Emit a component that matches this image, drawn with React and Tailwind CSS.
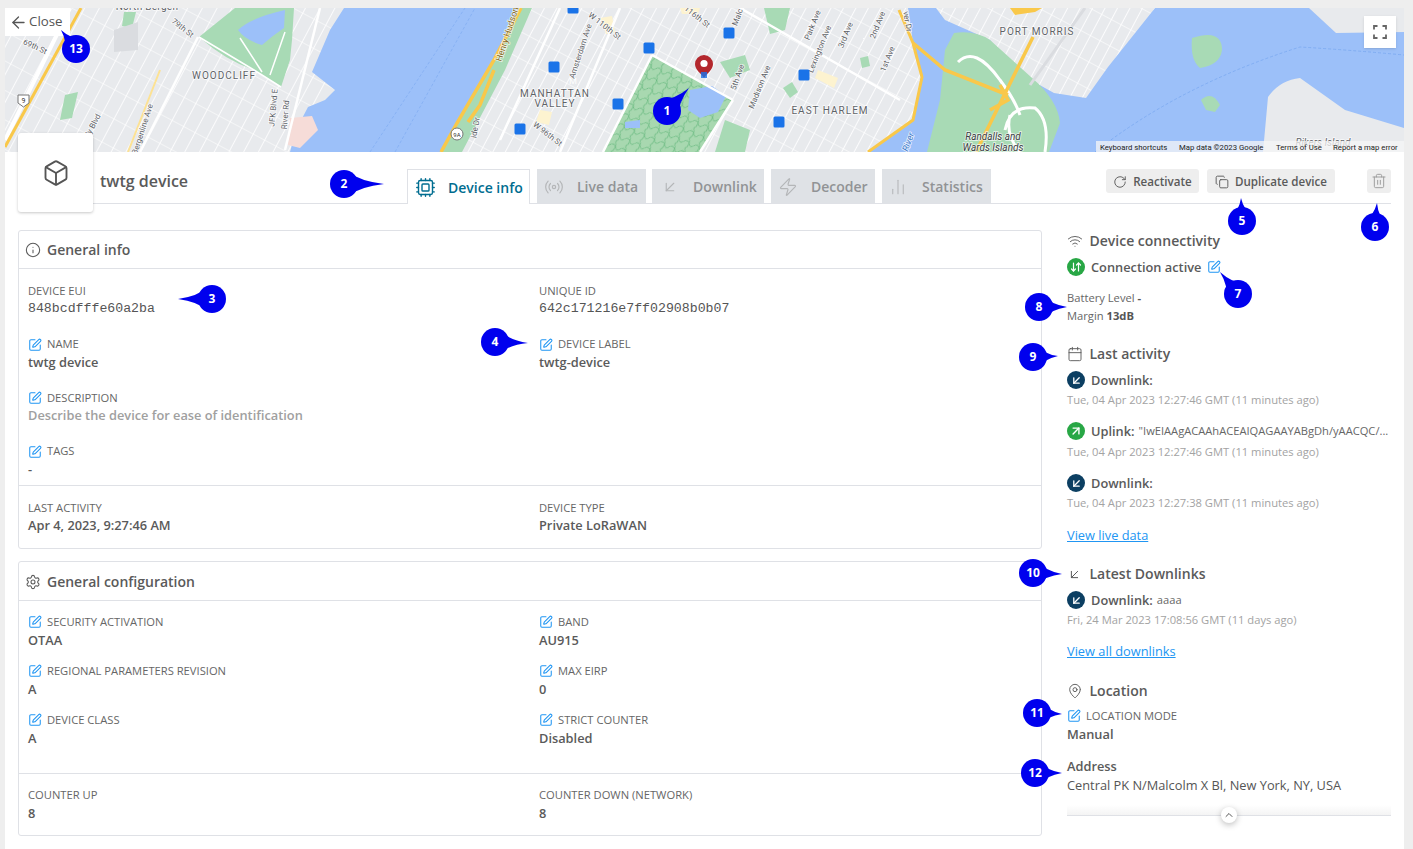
import React from "react";
import { ArrowLeft, Box, Cpu, Radio, ArrowDownLeft, ArrowUpRight, ArrowDownUp, Zap, ChartNoAxesColumn, RotateCw, Copy, Trash2, Wifi, SquarePen, Calendar, MapPin, Info, Settings, ChevronUp } from "lucide-react";

const balloons = [
  { n: 1, x: 667, y: 111, tx: 689, ty: 88 },
  { n: 2, x: 344, y: 184, tx: 384, ty: 184 },
  { n: 3, x: 212, y: 299, tx: 178, ty: 299 },
  { n: 4, x: 495, y: 342, tx: 528, ty: 343 },
  { n: 5, x: 1242, y: 221, tx: 1241, ty: 198 },
  { n: 6, x: 1375, y: 227, tx: 1377, ty: 203 },
  { n: 7, x: 1238, y: 294, tx: 1220, ty: 272 },
  { n: 8, x: 1039, y: 307, tx: 1067, ty: 307 },
  { n: 9, x: 1033, y: 357, tx: 1058, ty: 356 },
  { n: 10, x: 1033, y: 573, tx: 1062, ty: 574 },
  { n: 11, x: 1037, y: 713, tx: 1062, ty: 714 },
  { n: 12, x: 1035, y: 773, tx: 1062, ty: 773 },
  { n: 13, x: 76, y: 49, tx: 61, ty: 30 },
];

function Balloon({ n, x, y, tx, ty }) {
  const dx = tx - x, dy = ty - y;
  const len = Math.hypot(dx, dy);
  const ux = dx / len, uy = dy / len;
  const r = 14;
  const a = [ -uy * r * 0.85 + ux * 4, ux * r * 0.85 + uy * 4 ];
  const b = [ uy * r * 0.85 + ux * 4, -ux * r * 0.85 + uy * 4 ];
  const mid = 0.42;
  const c1 = [ dx * mid - uy * 2.5, dy * mid + ux * 2.5 ];
  const c2 = [ dx * mid + uy * 2.5, dy * mid - ux * 2.5 ];
  return (
    <div className="absolute w-0 h-0" style={{ left: x, top: y }}>
      <svg className="absolute overflow-visible left-0 top-0" width="1" height="1">
        <circle cx="0" cy="0" r={r} fill="#0000ee" />
        <path d={`M${a[0]} ${a[1]} Q${c1[0]} ${c1[1]} ${dx} ${dy} Q${c2[0]} ${c2[1]} ${b[0]} ${b[1]} Z`} fill="#0000ee" />
      </svg>
      <span className="absolute -left-[14px] -top-[14px] w-[28px] h-[28px] flex items-center justify-center text-white text-[12px] font-bold font-['Noto_Sans']">{n}</span>
    </div>
  );
}

const L = ({ x, y, r = 0, s = 9, c = "#5f6368", i, w = 400, ls = 0, children }) => (
  <text x={x} y={y} textAnchor="middle" fontSize={s} fill={c} fontStyle={i ? "italic" : "normal"} fontWeight={w} letterSpacing={ls} fontFamily="Roboto, sans-serif" transform={r ? `rotate(${r} ${x} ${y})` : undefined} stroke="#ffffff" strokeWidth="1.6" paintOrder="stroke" strokeOpacity="0.75">{children}</text>
);

const Metro = ({ x, y }) => (
  <g>
    <rect x={x - 5.5} y={y - 5.5} width="11" height="11" rx="1.5" fill="#1a73e8" />
    <text x={x} y={y + 3.5} textAnchor="middle" fontSize="9.5" fontWeight="400" fill="white" fontFamily="'Liberation Sans', sans-serif">M</text>
  </g>
);

function MapArt() {
  return (
    <svg className="w-full h-full block" viewBox="5 8 1399 144" preserveAspectRatio="none">
      <defs>
        <pattern id="gridA" width="26" height="13" patternUnits="userSpaceOnUse" patternTransform="rotate(-62)">
          <rect width="26" height="13" fill="#e8eaed" />
          <path d="M0 0H26" stroke="#fff" strokeWidth="1.7" />
          <path d="M0 0V13" stroke="#fff" strokeWidth="1.1" />
        </pattern>
        <pattern id="gridB" width="24" height="11" patternUnits="userSpaceOnUse" patternTransform="rotate(-62)">
          <rect width="24" height="11" fill="#e8eaed" />
          <path d="M0 0H24" stroke="#fff" strokeWidth="1.8" />
          <path d="M0 0V11" stroke="#fff" strokeWidth="1.2" />
        </pattern>
        <pattern id="parkLines" width="11" height="11" patternUnits="userSpaceOnUse" patternTransform="rotate(24)">
          <rect width="11" height="11" fill="#a8d8b0" />
          <path d="M0 5Q3 1 6 5T11 5M4 0Q8 5 4 11" stroke="#62b67a" strokeWidth="0.7" fill="none" />
        </pattern>
      </defs>
      <rect x="5" y="8" width="1399" height="144" fill="#9cc0f9" />
      {/* New Jersey side */}
      <path d="M5 8H344L330 30L312 72L335 90L325 100L308 107L296 130L290 152H5Z" fill="url(#gridA)" />
      <path d="M199 37L235 8H294L292 40L290 60L281 87Q265 78 254 70Q225 60 199 37Z" fill="#a8dab5" />
      <path d="M238 30Q250 18 285 10L284 28Q272 36 262 45Q245 40 238 30Z" fill="#9cc0f9" />
      <path d="M199 37L254 70L281 87M240 38L262 72M285 32L270 75" stroke="#fff" strokeWidth="1.5" fill="none" />
      <path d="M290 118L312 116L318 130L300 148L288 145Z" fill="#f6dcd8" />
      <polygon points="65,95 78,92 72,118 60,120" fill="#a8dab5" />
      <polygon points="124,12 136,12 132,28 122,26" fill="#a8dab5" />
      <polygon points="114,30 138,22 138,50 114,52" fill="#dadce0" />
      <path d="M70 8L5 140" stroke="#fff" strokeWidth="4" />
      <path d="M198 37L140 152" stroke="#fff" strokeWidth="2.5" />
      <path d="M320 8L285 150" stroke="#fff" strokeWidth="2.5" />
      <path d="M160 70L128 152" stroke="#fde293" strokeWidth="2" />
      <path d="M81 8L5 147" stroke="#f9c84a" strokeWidth="3" />
      {/* Manhattan */}
      <polygon points="521,8 908,8 913,43 922,77 913,120 868,152 441,152 494,60" fill="url(#gridB)" />
      <path d="M521 8L494 60L457 123L441 152L462 152L505 70L532 8Z" fill="#a8dab5" />
      <path d="M521 8L494 60L457 123L441 152" stroke="#f9c84a" strokeWidth="3.5" fill="none" />
      <path d="M494 70L480 105L468 122" stroke="#f9c84a" strokeWidth="3.5" fill="none" />
      <polygon points="652,55 733,100 700,152 603,152" fill="url(#parkLines)" />
      <path d="M690 90L712 86L726 96L718 112L700 118L688 110Z" fill="#9cc0f9" />
      <polygon points="625,122 640,120 640,128 625,128" fill="#9cc0f9" />
      <polygon points="783,88 792,82 798,92 790,98" fill="#a8dab5" />
      <polygon points="860,58 868,56 870,66 862,68" fill="#a8dab5" />
      <polygon points="725,120 750,130 745,152 715,152" fill="#a8dab5" />
      <polygon points="720,62 745,55 750,70 730,78" fill="#a8dab5" />
      <polygon points="764,8 790,8 785,30 770,34" fill="#a8dab5" />
      <polygon points="680,8 700,8 698,14 682,14" fill="#fdf3d0" />
      <polygon points="600,18 612,16 615,32 606,34" fill="#fdf3d0" />
      <polygon points="818,70 838,78 834,88 815,78" fill="#fdf3d0" />
      <polygon points="540,110 552,112 549,125 536,122" fill="#fdf3d0" />
      <path d="M652 55L733 100M603 152L652 55M733 100L700 152M560 8L500 140M740 8L900 100M620 8L560 152" stroke="#fff" strokeWidth="2.5" fill="none" />
      <path d="M899 10L913 43L922 77L913 120L868 152" stroke="#f9c84a" strokeWidth="3" fill="none" />
      {/* Bronx */}
      <polygon points="936,8 1155,8 1108,67 1086,98 1054,93 1018,73 990,40 945,20" fill="url(#gridB)" />
      {/* Randalls */}
      <path d="M954 33Q975 30 990 40L1031 77Q1058 100 1060 123L1049 152H927L940 100L945 50Z" fill="#a8dab5" />
      <path d="M958 62Q975 45 1000 80Q1015 100 1020 115M1005 130Q1010 105 1035 108Q1050 120 1045 152M1020 152Q1005 135 1010 115" stroke="#fff" strokeWidth="3" fill="none" />
      <path d="M913 43L945 70L1008 95M1033 37L976 152M1000 85L1008 100L990 110" stroke="#f9c84a" strokeWidth="3.5" fill="none" />
      <path d="M1085 8L1030 85" stroke="#dadce0" strokeWidth="3" fill="none" />
      <path d="M1010 8L1022 8L1042 8L1035 12L1015 15Z" fill="#f9c84a" />
      {/* Islands */}
      <path d="M1192 38Q1222 28 1222 50Q1220 65 1200 68Q1190 60 1192 38Z" fill="#a8dab5" />
      <path d="M1201 100Q1212 90 1220 105L1215 112L1206 110Z" fill="#a8dab5" />
      <polygon points="1309,8 1404,8 1404,32 1336,33" fill="#e8eaed" />
      <path d="M1263 152L1268 97Q1280 80 1300 78L1345 110L1404 128V152Z" fill="#e8eaed" />
      <path d="M1095 152Q1180 85 1300 47Q1350 50 1404 55" stroke="#7aa8f0" strokeWidth="0.8" strokeDasharray="3 2" fill="none" />
      <path d="M370 152L465 8M395 152L475 8" stroke="#7aa8f0" strokeWidth="0.6" strokeDasharray="3 2" fill="none" />
      {/* Labels */}
      <L x="147" y="10" s="10" ls="0.3">North Bergen</L>
      <L x="181" y="30" r="38" s="8">79th St</L>
      <L x="34" y="49" r="25" s="8">69th St</L>
      <L x="224" y="79" s="10" ls="1">WOODCLIFF</L>
      <L x="276" y="108" r="-85" s="8">JFK Blvd E</L>
      <L x="288" y="115" r="-85" s="8">River Rd</L>
      <L x="145" y="130" r="-72" s="8">Bergenline Ave</L>
      <L x="95" y="127" r="-62" s="8">dy Blvd</L>
      <L x="510" y="35" r="-72" s="9" c="#8a6d1f">Henry Hudson</L>
      <L x="603" y="28" r="38" s="8">W 110th St</L>
      <L x="692" y="16" r="38" s="8">W 116th St</L>
      <L x="583" y="52" r="-72" s="8">Amsterdam Ave</L>
      <L x="555" y="97" s="10" ls="1">MANHATTAN</L>
      <L x="555" y="107" s="10" ls="1">VALLEY</L>
      <L x="546" y="136" r="38" s="8">W 96th St</L>
      <L x="478" y="128" r="-80" s="8">ide Dr</L>
      <L x="740" y="18" r="-70" s="8">Malc</L>
      <L x="740" y="78" r="-70" s="8">5th Ave</L>
      <L x="762" y="88" r="-68" s="8">Madison Ave</L>
      <L x="815" y="26" r="-68" s="8">Park Ave</L>
      <L x="822" y="50" r="-68" s="8">Lexington Ave</L>
      <L x="848" y="36" r="-68" s="8">3rd Ave</L>
      <L x="880" y="26" r="-68" s="8">2nd Ave</L>
      <L x="890" y="60" r="-68" s="8">1st Ave</L>
      <L x="830" y="114" s="10" ls="1">EAST HARLEM</L>
      <L x="1037" y="35" s="10" ls="1">PORT MORRIS</L>
      <L x="993" y="140" s="10" i c="#3c4043">Randalls and</L>
      <L x="993" y="151" s="10" i c="#3c4043">Wards Islands</L>
      <L x="911" y="143" r="-70" s="9" i c="#3b78c9">River</L>
      <L x="905" y="22" r="80" s="8" c="#5f6368">ver Dr</L>
      <L x="1323" y="146" s="10" i>Rikers Island</L>
      {/* Shields */}
      <g><path d="M18 95H29V103L23.5 107L18 103Z" fill="#fff" stroke="#777" strokeWidth="1" /><text x="23.5" y="103" textAnchor="middle" fontSize="7" fill="#333" fontFamily="Roboto, sans-serif">9</text></g>
      <g><circle cx="457" cy="134" r="6" fill="#fff" stroke="#777" strokeWidth="1" /><text x="457" y="137" textAnchor="middle" fontSize="6" fill="#333" fontFamily="Roboto, sans-serif">9A</text></g>
      <Metro x="554" y="67" /><Metro x="618" y="104" /><Metro x="520" y="129" /><Metro x="649" y="48" />
      <Metro x="573" y="8" /><Metro x="729" y="33" /><Metro x="804" y="75" /><Metro x="779" y="122" />
      {/* Marker */}
      <path d="M704 55a9 9 0 0 0-9 9c0 6 6 9 9 14c3-5 9-8 9-14a9 9 0 0 0-9-9Z" fill="#b3272d" />
      <circle cx="704" cy="63.5" r="3.6" fill="#fff" />
      <rect x="701" y="72" width="6" height="6" fill="#1a73e8" opacity="0.8" />
      {/* Attribution */}
      <rect x="1096" y="141" width="308" height="11" fill="#f5f5f5" fillOpacity="0.75" />
      <g fontSize="7.75" fill="#222" fontFamily="Roboto, sans-serif">
        <text x="1100" y="150">Keyboard shortcuts</text>
        <text x="1179" y="150">Map data ©2023 Google</text>
        <text x="1276" y="150">Terms of Use</text>
        <text x="1333" y="150">Report a map error</text>
      </g>
    </svg>
  );
}

const Edit = ({ className = "" }) => <SquarePen size={14} strokeWidth={1.8} className={`text-[#2196f3] shrink-0 ${className}`} />;

function Field({ label, edit, mono, muted, tall, children }) {
  return (
    <div className="min-w-0">
      <div className="flex items-center h-[18px] text-[11.2px] text-[#666666] whitespace-nowrap">
        {edit && <Edit className="mr-[5px]" />}
        {label}
      </div>
      <div className={`h-[18px] flex items-center whitespace-nowrap ${tall ? "mt-[1px]" : ""} ${mono ? "font-['Liberation_Mono'] text-[13.23px] text-[#555555]" : muted ? "text-[12.8px] font-semibold text-[#a0a0a0]" : "text-[12.8px] font-semibold text-[#5a5a5a]"}`}>{children}</div>
    </div>
  );
}

function Card({ icon, title, className = "", head = "h-[38px]", children }) {
  return (
    <section className={`border border-[#dfe1e6] rounded-[3px] ${className}`}>
      <div className={`border-b border-[#dfe1e6] pl-[6px] flex items-center gap-[6px] text-[14px] font-semibold text-[#5a5a5a] ${head}`}>
        {icon}
        <span>{title}</span>
      </div>
      {children}
    </section>
  );
}

const Tab = ({ icon, label, w }) => (
  <div className={`h-[34px] bg-[#dfe2e6] flex items-center pl-[7px] pt-[1px] text-[14px] font-semibold text-[#919395] whitespace-nowrap ${w}`}>
    {icon}
    <span>{label}</span>
  </div>
);

const Action = ({ icon, label, w }) => (
  <div className={`h-[24px] bg-[#eeeeee] rounded-[3px] flex items-center justify-center gap-[6px] pt-[1px] text-[11.6px] font-semibold text-[#5a5a5a] whitespace-nowrap ${w}`}>
    {icon}
    <span>{label}</span>
  </div>
);

const Heading = ({ icon, className = "", children }) => (
  <div className={`h-[18px] flex items-center text-[14px] font-semibold text-[#5a5a5a] whitespace-nowrap ${className}`}>
    <span className="w-[22.5px] flex items-center shrink-0">{icon}</span>
    <span className="pb-[2px]">{children}</span>
  </div>
);

const Dot = ({ color, children }) => (
  <span className={`w-[18px] h-[18px] rounded-full flex items-center justify-center text-white shrink-0 mr-[6px] ${color}`}>{children}</span>
);

const DownDot = () => <Dot color="bg-[#0c3f62]"><ArrowDownLeft size={13} strokeWidth={2.4} /></Dot>;

const EventRow = ({ dot, label, detail, className = "" }) => (
  <div className={`h-[20px] flex items-center text-[12.8px] font-semibold text-[#5a5a5a] whitespace-nowrap overflow-hidden ${className}`}>
    {dot}
    <span className="pt-[1px]">{label}</span>
    {detail && <span className="ml-[4px] pt-[1px] text-[11.15px] font-normal text-[#666666]">{detail}</span>}
  </div>
);

const DateRow = ({ className = "mt-[1px]", children }) => (
  <div className={`h-[18px] flex items-center text-[11.2px] text-[#a3a3a3] whitespace-nowrap ${className}`}>{children}</div>
);

export default function App() {
  return (
    <div className="relative h-[849px] overflow-hidden bg-[#eeeeee] pt-[8px] pl-[5px] pr-[9px] font-['Open_Sans',sans-serif]">
      <div className="bg-white h-[841px] rounded-t-[3px]">
        <div className="relative h-[144px] overflow-hidden">
          <MapArt />
          <div className="absolute left-0 top-0 w-[65px] h-[28px] bg-white flex items-center pl-[4px] gap-[1px] text-[13.3px] text-[#555555]">
            <ArrowLeft size={19} strokeWidth={1.6} />
            <span>Close</span>
          </div>
          <div className="absolute right-[8px] top-[8px] w-[32px] h-[32px] bg-white flex items-center justify-center shadow-sm">
            <svg width="14" height="14" viewBox="0 0 14 14" fill="none" stroke="#666666" strokeWidth="1.8"><path d="M1 4.5V1H4.5M9.5 1H13V4.5M13 9.5V13H9.5M4.5 13H1V9.5" /></svg>
          </div>
        </div>

        <header className="flex h-[52px] pl-[13px] pr-[13px]">
          <div className="relative w-[75px] h-[79px] -mt-[19px] bg-white rounded-[3px] shadow-[0_1px_3px_rgba(0,0,0,0.22)] flex items-center justify-center shrink-0">
            <Box size={28} strokeWidth={1.6} className="text-[#555555]" />
          </div>
          <div className="flex-1 flex border-b border-[#dfe1e6] min-w-0">
            <div className="w-[314px] pl-[7px] pt-[18px] text-[16px] leading-[22px] font-semibold text-[#5a5a5a] shrink-0">twtg device</div>
            <div className="flex items-start pt-[17px] h-[52px]">
              <div className="h-[35px] w-[123px] bg-white border border-b-0 border-[#dfe1e6] flex items-center pl-[7px] pt-[1px] text-[14px] font-semibold text-[#006d90] whitespace-nowrap relative">
                <Cpu size={21} strokeWidth={1.6} className="mr-[12px] shrink-0" />
                <span>Device info</span>
              </div>
              <Tab w="w-[109px] ml-[7px]" icon={<Radio size={20} strokeWidth={1.4} className="mr-[13px] text-[#b4b6b8]" />} label="Live data" />
              <Tab w="w-[112px] ml-[6px]" icon={<ArrowDownLeft size={18} strokeWidth={1.5} className="ml-[2px] mr-[14px] text-[#b4b6b8]" />} label="Downlink" />
              <Tab w="w-[104px] ml-[7px]" icon={<Zap size={20} strokeWidth={1.4} className="mr-[13px] text-[#b4b6b8]" />} label="Decoder" />
              <Tab w="w-[109px] ml-[7px]" icon={<ChartNoAxesColumn size={18} strokeWidth={1.4} className="mr-[15px] text-[#b4b6b8]" />} label="Statistics" />
            </div>
            <div className="flex items-start pt-[17px] ml-[115px]">
              <Action w="w-[93px]" icon={<RotateCw size={14} strokeWidth={1.6} />} label="Reactivate" />
              <Action w="w-[128px] ml-[8px]" icon={<Copy size={14} strokeWidth={1.6} />} label="Duplicate device" />
              <div className="ml-[32px] w-[24px] h-[24px] bg-[#eeeeee] rounded-[3px] flex items-center justify-center">
                <Trash2 size={16} strokeWidth={1.4} className="text-[#9a9a9a]" />
              </div>
            </div>
          </div>
        </header>

        <main className="flex pl-[13px] pr-[13px] pt-[26px]">
          <div className="w-[1024px] shrink-0">
            <Card title="General info" icon={<Info size={16} strokeWidth={1.6} />}>
              <div className="grid grid-cols-[511px_1fr] auto-rows-[53.5px] pl-[9px] pt-[13px] h-[216px]">
                <Field label="DEVICE EUI" mono>848bcdfffe60a2ba</Field>
                <Field label="UNIQUE ID" mono>642c171216e7ff02908b0b07</Field>
                <Field label="NAME" edit>twtg device</Field>
                <Field label="DEVICE LABEL" edit>twtg-device</Field>
                <Field label="DESCRIPTION" edit muted>Describe the device for ease of identification</Field>
                <div />
                <Field label="TAGS" edit>-</Field>
              </div>
              <div className="grid grid-cols-[511px_1fr] border-t border-[#dfe1e6] pl-[9px] pt-[13px] h-[63px]">
                <Field label="LAST ACTIVITY">Apr 4, 2023, 9:27:46 AM</Field>
                <Field label="DEVICE TYPE">Private LoRaWAN</Field>
              </div>
            </Card>

            <Card className="mt-[12px]" head="h-[39px] pt-[1px]" title="General configuration" icon={<Settings size={16} strokeWidth={1.6} />}>
              <div className="grid grid-cols-[511px_1fr] auto-rows-[49px] pl-[9px] pt-[12px] h-[172px]">
                <Field tall label="SECURITY ACTIVATION" edit>OTAA</Field>
                <Field tall label="BAND" edit>AU915</Field>
                <Field tall label="REGIONAL PARAMETERS REVISION" edit>A</Field>
                <Field tall label="MAX EIRP" edit>0</Field>
                <Field tall label="DEVICE CLASS" edit>A</Field>
                <Field tall label="STRICT COUNTER" edit>Disabled</Field>
              </div>
              <div className="grid grid-cols-[511px_1fr] border-t border-[#dfe1e6] pl-[9px] pt-[12px] h-[62px]">
                <Field tall label="COUNTER UP">8</Field>
                <Field tall label="COUNTER DOWN (NETWORK)">8</Field>
              </div>
            </Card>
          </div>

          <aside className="ml-[25px] w-[324px] shrink-0 pt-[2px]">
            <Heading icon={<Wifi size={16} strokeWidth={1.4} />}>Device connectivity</Heading>
            <div className="h-[20px] mt-[7px] flex items-center text-[12.8px] font-semibold text-[#5a5a5a] whitespace-nowrap">
              <Dot color="bg-[#28a745]"><ArrowDownUp size={12} strokeWidth={2.4} /></Dot>
              <span className="pt-[1px]">Connection active</span>
              <Edit className="ml-[6px]" />
            </div>
            <div className="h-[18px] mt-[12px] flex items-center text-[11.2px] text-[#666666] whitespace-pre">Battery Level <b className="font-bold text-[#555555]">-</b></div>
            <div className="h-[18px] flex items-center text-[11.2px] text-[#666666] whitespace-pre">Margin <b className="font-bold text-[#555555]">13dB</b></div>

            <Heading className="mt-[20px]" icon={<Calendar size={16} strokeWidth={1.4} />}>Last activity</Heading>
            <EventRow className="mt-[7px]" dot={<DownDot />} label="Downlink:" />
            <DateRow>Tue, 04 Apr 2023 12:27:46 GMT (11 minutes ago)</DateRow>
            <EventRow className="mt-[12px]" dot={<Dot color="bg-[#28a745]"><ArrowUpRight size={14} strokeWidth={2.4} /></Dot>} label="Uplink:" detail={'"IwEIAAgACAAhACEAIQAGAAYABgDh/yAACQC/...'} />
            <DateRow className="mt-[2px]">Tue, 04 Apr 2023 12:27:46 GMT (11 minutes ago)</DateRow>
            <EventRow className="mt-[12px]" dot={<DownDot />} label="Downlink:" />
            <DateRow>Tue, 04 Apr 2023 12:27:38 GMT (11 minutes ago)</DateRow>
            <div className="h-[18px] mt-[15px] flex items-center text-[12.8px] text-[#2196f3] underline">View live data</div>

            <Heading className="mt-[20px]" icon={<ArrowDownLeft size={15} strokeWidth={1.6} />}>Latest Downlinks</Heading>
            <EventRow className="mt-[7px]" dot={<DownDot />} label="Downlink:" detail="aaaa" />
            <DateRow>Fri, 24 Mar 2023 17:08:56 GMT (11 days ago)</DateRow>
            <div className="h-[18px] mt-[14px] flex items-center text-[12.8px] text-[#2196f3] underline">View all downlinks</div>

            <Heading className="mt-[21px]" icon={<MapPin size={16} strokeWidth={1.4} />}>Location</Heading>
            <div className="mt-[7px]"><Field tall label="LOCATION MODE" edit>Manual</Field></div>
            <div className="h-[18px] mt-[14px] flex items-center text-[12.8px] font-semibold text-[#5a5a5a]">Address</div>
            <div className="h-[18px] mt-[1px] flex items-center text-[12.8px] text-[#555555] whitespace-nowrap">Central PK N/Malcolm X Bl, New York, NY, USA</div>

            <div className="relative mt-[10px] h-[11px] bg-gradient-to-b from-white to-[#f4f4f4] border-b border-[#dfe1e6]">
              <div className="absolute left-[154px] -bottom-[8px] w-[16px] h-[16px] rounded-full bg-white shadow-[0_2px_6px_rgba(0,0,0,0.25)] flex items-center justify-center text-[#555555]">
                <ChevronUp size={12} strokeWidth={2} />
              </div>
            </div>
          </aside>
        </main>
      </div>
      {balloons.map((b) => <Balloon key={b.n} {...b} />)}
    </div>
  );
}
